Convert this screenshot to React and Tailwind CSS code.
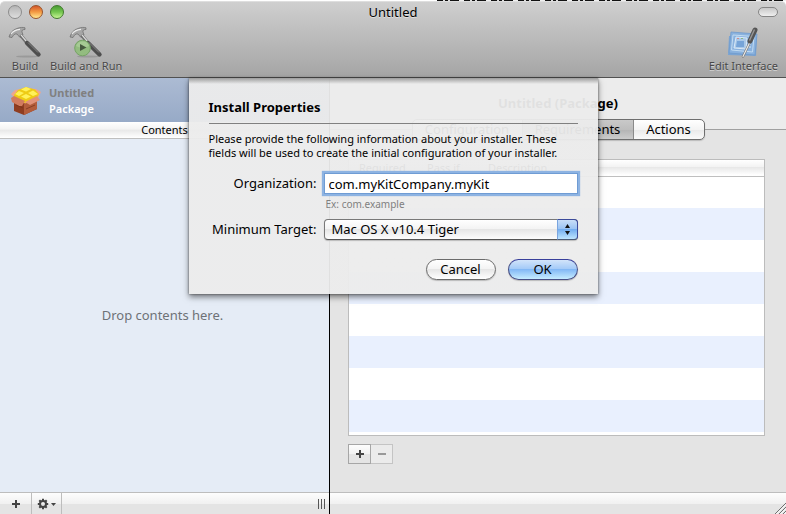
import React from "react";

function Hammer() {
  return (
    <g>
      <ellipse cx="19" cy="30.500" rx="11" ry="1" fill="#777" opacity="0.4" />
      <path d="M1 11 C2 7 5 3.500 9 2.500 C12 1.200 15 1.200 17 1.800 L17 3.500 C14.500 3.500 13.500 4.500 14 6 L15 9 L12 11.500 L9 8 C6.500 7.500 5.500 9 4 11.500 Z" fill="#a6a6a6" stroke="#696969" strokeWidth="0.7" />
      <path d="M3 8 C5 5 8 3.800 12 3.400" stroke="#ececec" strokeWidth="1.200" fill="none" />
      <path d="M12.500 9 L19 17" stroke="#6e6e6e" strokeWidth="3.400" />
      <path d="M13 8.800 L19 16.200" stroke="#dedede" strokeWidth="1.300" />
      <path d="M19 17 L30.500 28.500" stroke="#4e4e4e" strokeWidth="4.400" strokeLinecap="round" />
      <path d="M20 16.500 L30 26.500" stroke="#858585" strokeWidth="1" />
    </g>
  );
}

function HammerIcon() {
  return (
    <svg width="34" height="32" viewBox="0 0 34 32" aria-hidden="true">
      <Hammer />
    </svg>
  );
}

function HammerRunIcon() {
  return (
    <svg width="34" height="32" viewBox="0 0 34 32" aria-hidden="true">
      <Hammer />
      <circle cx="13.500" cy="22" r="7.800" fill="#93bc80" stroke="#76a366" />
      <path d="M7 20 A7 7 0 0 1 20 20 Q13 23 7 20" fill="#b2d3a2" opacity="0.6" />
      <path d="M11 18 L17.500 21.500 L11 25 Z" fill="#46593f" />
    </svg>
  );
}

function InterfaceIcon() {
  return (
    <svg width="32" height="32" viewBox="0 0 32 32" aria-hidden="true">
      <path d="M2 10 L30 11 L29 30 L1 29 Z" fill="#7ba4d2" />
      <path d="M4 6 L30 8 L28 29 L2 27 Z" fill="#8ab2de" stroke="#6f9bcd" strokeWidth="0.8" />
      <path d="M6 9 L27 10.500 L25.500 26 L4.500 24 Z" fill="none" stroke="#c3dcf2" />
      <path d="M9 11 L20 12 L19 23 L7 22 Z" fill="#a9c8e8" stroke="#d9e9f7" />
      <path d="M10 15 H17 V21 H9 Z" fill="#76a4d8" />
      <path d="M10 12.500 H12" stroke="#cf8b8b" />
      <path d="M14 12.500 H16" stroke="#87b787" />
      <path d="M21 15 H24 M21 18 H24 M21 21 H24" stroke="#d6e7f8" />
      <path d="M23 16 L16 30.500" stroke="#777" strokeWidth="2.400" strokeLinecap="round" />
      <path d="M23 16 L16 30.500" stroke="#eaeaea" strokeWidth="1.200" strokeLinecap="round" />
      <path d="M28 4 L23 15" stroke="#555" strokeWidth="5" strokeLinecap="round" />
      <path d="M27.500 3.500 L22.500 14.500" stroke="#979797" strokeWidth="1.400" />
    </svg>
  );
}

function PackageIcon() {
  return (
    <svg width="32" height="30" viewBox="0 0 32 30" aria-hidden="true">
      <path d="M1 9 L5 5 L16 3 L26 4 L31 7 L27 15 L15 20 L5 14 Z" fill="#eda68f" />
      <path d="M4 14 L16 19 L27 13 L27 24 L14 30 L4 26 Z" fill="#8f3d20" />
      <path d="M14 19 L27 14 L27 24 L14 30 Z" fill="#b35d3b" />
      <path d="M4 10 L8 5 L16 2 L25 4.500 L29 9 L26 14 L15 18 L5 14 Z" fill="#eecb14" />
      <path d="M16 2 L21 4 L16 6.500 L11 4.500 Z M9 6 L14 8 L9 11 L5 9 Z M23 5.500 L28 9 L23 11 L18 8 Z M16 9 L21 11.500 L16 14 L11 11.500 Z" fill="#fff15a" />
      <path d="M1 13 L4 11 L15 16 L12 21 L9 21 L2 17 Z" fill="#d17c5e" />
      <path d="M15 17 L27 11 L30 15 L20 20 Z" fill="#e29278" />
      <path d="M6 20 L13 23 M16 24 L25 20" stroke="#773018" strokeWidth="0.7" />
    </svg>
  );
}

function GearIcon() {
  return (
    <svg width="20" height="12" viewBox="0 0 20 12" aria-hidden="true">
      <circle cx="6" cy="6" r="3" fill="none" stroke="#444" strokeWidth="2" />
      <path d="M6 0.800 V3 M6 9 V11.200 M0.800 6 H3 M9 6 H11.200 M2.300 2.300 L4 4 M8 8 L9.700 9.700 M9.700 2.300 L8 4 M4 8 L2.300 9.700" stroke="#444" strokeWidth="2" />
      <path d="M14 5 H19 L16.500 8 Z" fill="#444" />
    </svg>
  );
}

function Plus() {
  return (
    <svg width="8" height="8" viewBox="0 0 8 8" aria-hidden="true">
      <path d="M4 0 V8 M0 4 H8" stroke="#444" strokeWidth="2" />
    </svg>
  );
}

function Minus() {
  return (
    <svg width="8" height="8" viewBox="0 0 8 8" aria-hidden="true">
      <path d="M0 4 H8" stroke="#999" strokeWidth="2" />
    </svg>
  );
}

function ToolButton({ label, children }) {
  return (
    <button type="button" className="flex flex-col items-center text-[11px] leading-[14px] text-[#484848] [text-shadow:0_1px_0_#d0d0d0]">
      {children}
      <span className="mt-px">{label}</span>
    </button>
  );
}

function TopBar() {
  return (
    <header className="h-[77px] shrink-0 overflow-hidden rounded-t-[5px] border-t border-b border-t-[#dedede] border-b-[#515151] bg-linear-to-b from-[#cfcfcf] to-[#a5a5a5]">
      <div className="grid h-5 grid-cols-3 items-center px-2">
        <div className="flex gap-[7px]">
          <button type="button" aria-label="Close" className="size-[14px] rounded-full border border-[#8c8c8c] bg-linear-to-b from-[#b5b5b5] to-[#dedede]" />
          <button type="button" aria-label="Minimize" className="size-[14px] rounded-full border border-[#98532b] bg-linear-to-b from-[#d3572c] via-[#f39a43] to-[#ffe88f]" />
          <button type="button" aria-label="Zoom" className="size-[14px] rounded-full border border-[#3f7a2b] bg-linear-to-b from-[#4a9c35] via-[#74c64f] to-[#c5f594]" />
        </div>
        <h1 className="text-center text-[13px] leading-5 [text-shadow:0_1px_0_#e0e0e0]">Untitled</h1>
        <button type="button" aria-label="Toggle toolbar" className="h-[10px] w-5 justify-self-end rounded-full border border-[#858585] bg-linear-to-b from-[#c8c8c8] to-[#efefef]" />
      </div>
      <div className="flex items-start gap-2 px-2 pt-1">
        <ToolButton label="Build"><HammerIcon /></ToolButton>
        <ToolButton label="Build and Run"><HammerRunIcon /></ToolButton>
        <div className="grow" />
        <ToolButton label="Edit Interface"><InterfaceIcon /></ToolButton>
      </div>
    </header>
  );
}

const barFill = "bg-[linear-gradient(#fdfdfd,#f1f1f1_50%,#e4e4e4_50%,#e4e4e4)]";
const headFill = "bg-[linear-gradient(#ffffff,#f3f3f3_45%,#e8e8e8_50%,#ffffff)]";

function Sidebar() {
  return (
    <aside className="flex w-[330px] shrink-0 flex-col border-r border-black bg-[#e5ecf6]">
      <div className="flex h-11 items-center gap-[7px] bg-linear-to-b from-[#acbbd3] to-[#97aac7] pl-[10px]">
        <PackageIcon />
        <div className="pt-[2px] text-[11px] leading-4">
          <p className="font-bold text-[#808080]">Untitled</p>
          <p className="font-semibold text-white">Package</p>
        </div>
      </div>
      <h2 className={`h-[17px] border-b border-[#bfbfbf] text-center text-[11px] leading-4 ${headFill}`}>Contents</h2>
      <div className="flex grow items-center justify-center pr-1 text-[13px] text-[#6e7277]">
        <p>Drop contents here.</p>
      </div>
      <footer className={`flex h-[22px] items-stretch border-t border-[#bdbdbd] ${barFill}`}>
        <button type="button" aria-label="Add" className="flex w-8 items-center justify-center border-r border-[#bdbdbd]"><Plus /></button>
        <button type="button" aria-label="Actions" className="flex w-[30px] items-center justify-center border-r border-[#bdbdbd]"><GearIcon /></button>
        <div className="grow" />
        <div className="mr-1 flex items-center gap-[2px]">
          <span className="h-[10px] w-px bg-[#555]" />
          <span className="h-[10px] w-px bg-[#555]" />
          <span className="h-[10px] w-px bg-[#555]" />
        </div>
      </footer>
    </aside>
  );
}

const rows = [0, 1, 2, 3, 4, 5, 6, 7];

function Details() {
  return (
    <main className="flex min-w-0 grow flex-col bg-[linear-gradient(#ececec_51px,#a0a0a0_51px,#a0a0a0_52px,#e4e4e4_52px)]">
      <h2 className="pt-[15px] text-center text-[13px] leading-5 font-bold">Untitled (Package)</h2>
      <nav className="mt-[6px] flex h-[21px] w-[293px] self-center rounded-[5px] border border-[#6e6e6e] bg-[linear-gradient(#ffffff,#f4f4f4_50%,#e9e9e9_50%,#fafafa)] text-[13px] leading-[19px] shadow-[0_1px_1px_#bbb]">
        <button type="button" className="w-[110px] border-r border-[#8a8a8a]">Configuration</button>
        <button type="button" className="w-[111px] border-r border-[#8a8a8a] bg-[linear-gradient(#c9c9c9,#bdbdbd_50%,#b3b3b3_50%,#cccccc)]">Requirements</button>
        <button type="button" className="grow">Actions</button>
      </nav>
      <div className="mt-[19px] mr-[21px] ml-[18px] border border-[#bcbcbc] bg-white pb-[3px]">
        <table className="w-full table-fixed border-collapse text-[11px]">
          <thead>
            <tr className={`h-4 border-b border-[#bfbfbf] text-left leading-[15px] ${headFill}`}>
              <th className="w-[70px] pl-[10px] font-normal">Required</th>
              <th className="w-[61px] pl-2 font-normal">Pass if</th>
              <th className="pl-2 font-normal">Description</th>
            </tr>
          </thead>
          <tbody>
            {rows.map((r) => (
              <tr key={r} className="h-8 even:bg-[#e9f0fe]">
                <td /><td /><td />
              </tr>
            ))}
          </tbody>
        </table>
      </div>
      <div className="mt-2 ml-[18px] flex h-5">
        <button type="button" aria-label="Add requirement" className={`flex w-[23px] items-center justify-center border border-[#a6a6a6] ${barFill}`}><Plus /></button>
        <button type="button" aria-label="Remove requirement" disabled className="flex w-[22px] items-center justify-center border border-l-0 border-[#c4c4c4] bg-[#ebebeb]"><Minus /></button>
      </div>
      <div className="grow" />
      <footer className={`flex h-[22px] items-end justify-end border-t border-[#bdbdbd] ${barFill}`}>
        <svg width="12" height="12" viewBox="0 0 12 12" aria-hidden="true">
          <path d="M0 13 L13 0 M4 13 L13 4 M8 13 L13 8" stroke="#6f6f6f" />
          <path d="M1.500 13 L13 1.500 M5.500 13 L13 5.500 M9.500 13 L13 9.500" stroke="#fff" />
        </svg>
      </footer>
    </main>
  );
}

function Sheet() {
  return (
    <form role="dialog" aria-labelledby="sheet-title" onSubmit={(e) => e.preventDefault()} className="h-[216px] w-[409px] bg-[linear-gradient(#9c9c9c,transparent_6px),linear-gradient(#ecececf2,#ecececf2)] px-5 shadow-[0_3px_6px_#00000080,0_0_2px_#00000080]">
      <h2 id="sheet-title" className="border-b border-[#808080] pt-[19px] pb-[6px] text-[13px] leading-5 font-bold">Install Properties</h2>
      <p className="mt-2 text-[11px] leading-[14px] whitespace-nowrap">
        Please provide the following information about your installer. These<br />
        fields will be used to create the initial configuration of your installer.
      </p>
      <div className="mt-[13px] grid grid-cols-[108px_1fr] gap-x-[7px] text-[13px]">
        <label htmlFor="org" className="text-right leading-[21px] whitespace-nowrap">Organization:</label>
        <input id="org" defaultValue="com.myKitCompany.myKit" className="h-[21px] w-full min-w-0 border border-[#6f9cd4] bg-white px-1 shadow-[0_0_1px_2px_#8db3e2] outline-none" />
        <p className="col-start-2 mt-[2px] mb-[7px] pl-[2px] text-[10px] leading-4 text-[#808080]">Ex: com.example</p>
        <label htmlFor="target" className="text-right leading-[21px] whitespace-nowrap">Minimum Target:</label>
        <div className="relative">
          <select id="target" className="h-[21px] w-full appearance-none rounded-[4px] border border-[#787878] border-b-[#555] bg-[linear-gradient(#ffffff,#f4f4f4_45%,#e6e6e6_50%,#fdfdfd)] pl-[7px] leading-[19px] shadow-[0_1px_1px_#bbb]">
            <option>Mac OS X v10.4 Tiger</option>
          </select>
          <span className="pointer-events-none absolute top-0 right-0 flex h-[21px] w-[21px] items-center justify-center rounded-r-[4px] border border-[#3b4a9b] border-b-[#4b5b78] border-l-[#7aa5df] bg-[linear-gradient(#c9def8,#9cc4f4_45%,#74aef0_50%,#bfe6ff)]">
            <svg width="7" height="13" viewBox="0 0 7 13" aria-hidden="true">
              <path d="M3.500 1 L6 5 H1 Z M3.500 12 L6 8 H1 Z" fill="#111" />
            </svg>
          </span>
        </div>
      </div>
      <div className="mt-[19px] flex justify-end gap-3 text-[13px] leading-[19px]">
        <button type="button" className="h-[21px] w-[70px] rounded-full border border-[#6b6b6b] bg-[linear-gradient(#ffffff,#f4f4f4_45%,#e6e6e6_50%,#ffffff)] shadow-[0_1px_1px_#bbb]">Cancel</button>
        <button type="submit" className="h-[21px] w-[70px] rounded-full border border-[#474f86] border-t-[#39409b] bg-[linear-gradient(#d2e4fa,#a5cbf8_45%,#83b8f5_50%,#c6ecff)] shadow-[0_1px_1px_#bbb]">OK</button>
      </div>
    </form>
  );
}

export default function App() {
  return (
    <div className="flex h-screen flex-col bg-white font-['Lucida_Grande','Noto_Sans','Open_Sans',sans-serif] text-black">
      <div className="h-px w-[349px] shrink-0 self-end bg-[repeating-linear-gradient(90deg,#111_0_6px,#ddd_6px_8px,#111_8px_11px,#ddd_11px_13px,#111_13px_22px,#eee_22px_27px)]" />
      <TopBar />
      <div className="relative flex min-h-0 grow">
        <Sidebar />
        <Details />
        <div className="absolute inset-x-0 top-0 flex justify-center">
          <Sheet />
        </div>
      </div>
    </div>
  );
}
